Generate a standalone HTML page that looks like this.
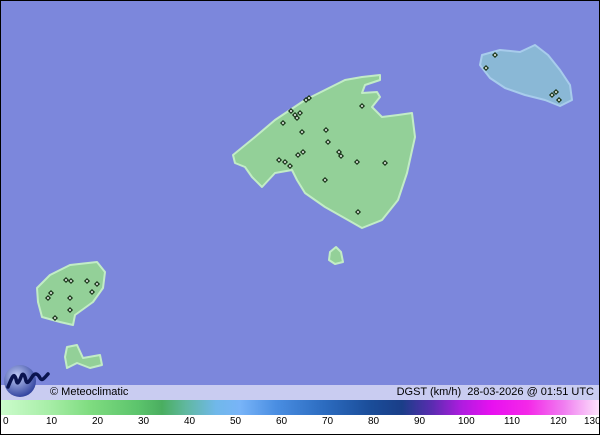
<!DOCTYPE html>
<html><head><meta charset="utf-8"><style>
html,body{margin:0;padding:0}
body{width:600px;height:435px;position:relative;overflow:hidden;background:#fff;font-family:"Liberation Sans",sans-serif}
#map{position:absolute;left:0;top:0}
.cap{position:absolute;left:0;top:385px;width:600px;height:15px;background:#c9ccf1;font-size:11px;line-height:15px;color:#000}
.grad{position:absolute;left:0;top:400px;width:600px;height:15px;background:linear-gradient(to right,#ccfccc 0%,#a8eea8 8%,#7fdc80 15%,#5cc46c 23%,#4aae60 27%,#60b8a0 31%,#70b8ea 36%,#78b4f8 40%,#4a8ee2 46%,#2c6cc0 54%,#1a4c98 62%,#1a3e88 67%,#5a2cb0 72%,#b01ce0 77%,#e810f0 82%,#f428e8 88%,#f07ef0 94%,#fde4fc 100%)}
.lab{position:absolute;top:416px;font-size:10px;color:#000}
.frame{position:absolute;left:0;top:0;width:598px;height:433px;border:1px solid #000}
</style></head><body>
<svg id="map" width="600" height="385" viewBox="0 0 600 385">
<rect width="600" height="385" fill="#7c87dc"/>
<g fill="#93d098" stroke="#c2ecc6" stroke-width="2" stroke-linejoin="round">
<polygon points="233,155 255,137 275,120 305,100 325,90 345,80 362,77 380,75 380,80 365,85 362,93 377,92 380,97 372,107 382,117 398,115 412,113 415,137 407,173 398,200 382,220 362,228 348,220 325,207 305,193 297,180 292,170 275,173 262,187 252,177 245,167 235,163"/>
<polygon points="330,252 336,247 341,252 343,262 335,264 329,260"/>
<polygon points="37,288 50,275 70,265 97,262 105,272 103,288 93,302 75,315 73,325 60,322 42,317 38,302"/>
<polygon points="67,347 77,345 83,358 100,355 102,365 90,368 77,363 67,368 65,357"/>
</g>
<polygon points="482,55 500,50 520,52 535,45 548,55 560,70 570,85 572,100 560,106 545,100 525,95 505,88 490,78 480,65" fill="#8ab8d6" stroke="#a8ccec" stroke-width="2" stroke-linejoin="round"/>
<g fill="#fff" stroke="#1e3a1e" stroke-width="1.3">
<rect x="-1.5" y="-1.5" width="3" height="3" transform="translate(309,98) rotate(45)"/>
<rect x="-1.5" y="-1.5" width="3" height="3" transform="translate(306,100) rotate(45)"/>
<rect x="-1.5" y="-1.5" width="3" height="3" transform="translate(291,111) rotate(45)"/>
<rect x="-1.5" y="-1.5" width="3" height="3" transform="translate(295,115) rotate(45)"/>
<rect x="-1.5" y="-1.5" width="3" height="3" transform="translate(300,113) rotate(45)"/>
<rect x="-1.5" y="-1.5" width="3" height="3" transform="translate(297,118) rotate(45)"/>
<rect x="-1.5" y="-1.5" width="3" height="3" transform="translate(283,123) rotate(45)"/>
<rect x="-1.5" y="-1.5" width="3" height="3" transform="translate(302,132) rotate(45)"/>
<rect x="-1.5" y="-1.5" width="3" height="3" transform="translate(326,130) rotate(45)"/>
<rect x="-1.5" y="-1.5" width="3" height="3" transform="translate(328,142) rotate(45)"/>
<rect x="-1.5" y="-1.5" width="3" height="3" transform="translate(362,106) rotate(45)"/>
<rect x="-1.5" y="-1.5" width="3" height="3" transform="translate(303,152) rotate(45)"/>
<rect x="-1.5" y="-1.5" width="3" height="3" transform="translate(298,155) rotate(45)"/>
<rect x="-1.5" y="-1.5" width="3" height="3" transform="translate(279,160) rotate(45)"/>
<rect x="-1.5" y="-1.5" width="3" height="3" transform="translate(285,162) rotate(45)"/>
<rect x="-1.5" y="-1.5" width="3" height="3" transform="translate(290,166) rotate(45)"/>
<rect x="-1.5" y="-1.5" width="3" height="3" transform="translate(339,152) rotate(45)"/>
<rect x="-1.5" y="-1.5" width="3" height="3" transform="translate(341,156) rotate(45)"/>
<rect x="-1.5" y="-1.5" width="3" height="3" transform="translate(357,162) rotate(45)"/>
<rect x="-1.5" y="-1.5" width="3" height="3" transform="translate(385,163) rotate(45)"/>
<rect x="-1.5" y="-1.5" width="3" height="3" transform="translate(325,180) rotate(45)"/>
<rect x="-1.5" y="-1.5" width="3" height="3" transform="translate(358,212) rotate(45)"/>
<rect x="-1.5" y="-1.5" width="3" height="3" transform="translate(66,280) rotate(45)"/>
<rect x="-1.5" y="-1.5" width="3" height="3" transform="translate(71,281) rotate(45)"/>
<rect x="-1.5" y="-1.5" width="3" height="3" transform="translate(87,281) rotate(45)"/>
<rect x="-1.5" y="-1.5" width="3" height="3" transform="translate(97,284) rotate(45)"/>
<rect x="-1.5" y="-1.5" width="3" height="3" transform="translate(51,293) rotate(45)"/>
<rect x="-1.5" y="-1.5" width="3" height="3" transform="translate(48,298) rotate(45)"/>
<rect x="-1.5" y="-1.5" width="3" height="3" transform="translate(70,298) rotate(45)"/>
<rect x="-1.5" y="-1.5" width="3" height="3" transform="translate(92,292) rotate(45)"/>
<rect x="-1.5" y="-1.5" width="3" height="3" transform="translate(70,310) rotate(45)"/>
<rect x="-1.5" y="-1.5" width="3" height="3" transform="translate(55,318) rotate(45)"/>
<rect x="-1.5" y="-1.5" width="3" height="3" transform="translate(495,55) rotate(45)"/>
<rect x="-1.5" y="-1.5" width="3" height="3" transform="translate(486,68) rotate(45)"/>
<rect x="-1.5" y="-1.5" width="3" height="3" transform="translate(552,95) rotate(45)"/>
<rect x="-1.5" y="-1.5" width="3" height="3" transform="translate(556,92) rotate(45)"/>
<rect x="-1.5" y="-1.5" width="3" height="3" transform="translate(559,100) rotate(45)"/>
</g>
</svg>
<div class="cap"><span style="position:absolute;left:50px">© Meteoclimatic</span><span style="position:absolute;right:6px">DGST (km/h)&nbsp;&nbsp;28-03-2026 @ 01:51 UTC</span></div>
<svg style="position:absolute;left:2px;top:363px" width="48" height="36" viewBox="0 0 48 36">
<defs><radialGradient id="lg2" cx="40%" cy="35%" r="70%"><stop offset="0" stop-color="#c0ccf6"/><stop offset="1" stop-color="#2a3c9a"/></radialGradient></defs>
<circle cx="18" cy="18" r="16" fill="url(#lg2)"/>
<path d="M6,24 C10,14 12,9 14,16 C15,21 16,22 19,14 C21,8 23,13 24,18 C25,21 27,19 30,14 C33,9 36,11 38,15 C40,19 43,14 46,11" fill="none" stroke="#0a1450" stroke-width="3.5" stroke-linecap="round"/>
</svg>
<div class="grad"></div>
<div class="lab" style="left:3px">0</div>
<div class="lab" style="left:46px">10</div>
<div class="lab" style="left:92px">20</div>
<div class="lab" style="left:138px">30</div>
<div class="lab" style="left:184px">40</div>
<div class="lab" style="left:230px">50</div>
<div class="lab" style="left:276px">60</div>
<div class="lab" style="left:322px">70</div>
<div class="lab" style="left:368px">80</div>
<div class="lab" style="left:414px">90</div>
<div class="lab" style="left:458px">100</div>
<div class="lab" style="left:504px">110</div>
<div class="lab" style="left:550px">120</div>
<div class="lab" style="left:584px">130</div>
<div class="frame"></div>
</body></html>
